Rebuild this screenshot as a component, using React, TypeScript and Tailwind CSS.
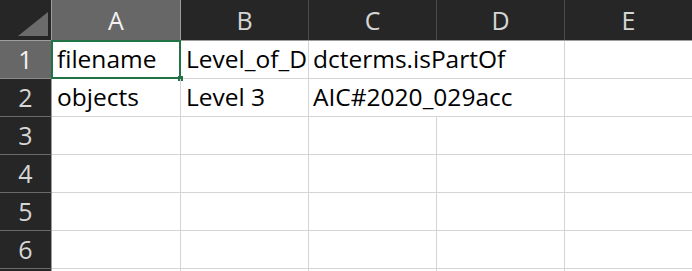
const cols = [
  { key: "A", w: "w-[129px]" },
  { key: "B", w: "w-[128px]" },
  { key: "C", w: "w-[128px]" },
  { key: "D", w: "w-[128px]" },
  { key: "E", w: "w-[128px]" },
];

const rows = [
  { n: 1, a: "filename", b: "Level_of_D", c: "dcterms.isPartOf" },
  { n: 2, a: "objects", b: "Level 3", c: "AIC#2020_029acc" },
  { n: 3 },
  { n: 4 },
  { n: 5 },
  { n: 6 },
  { n: 0 },
];

const font = { fontFamily: '"Open Sans", "Noto Sans", sans-serif' };

export default function App() {
  return (
    <div className="w-[692px] h-[271px] overflow-hidden bg-white" style={font}>
      {/* column headers */}
      <div className="flex h-[41px] bg-[#262626] border-b border-[#9e9e9e]">
        <div className="w-[52px] shrink-0 border-r border-[#9e9e9e] flex items-end justify-end pr-[3px] pb-[4px]">
          <svg width="30" height="24" viewBox="0 0 30 24">
            <polygon points="30,0 30,24 0,24" fill="#6b6b6b" />
          </svg>
        </div>
        {cols.map((c) => (
          <div
            key={c.key}
            className={`${c.w} shrink-0 border-r flex items-center justify-center text-[25px] leading-none pt-[1px] ${
              c.key === "A"
                ? "bg-[#676767] border-[#9e9e9e] text-[#f2f2f2]"
                : "border-[#4a4a4a] text-[#d6d6d6]"
            }`}
          >
            {c.key}
          </div>
        ))}
      </div>

      {rows.map((r, i) => (
        <div key={i} className="flex h-[38px]">
          <div
            className={`w-[52px] shrink-0 border-r border-b border-r-[#9e9e9e] flex items-center justify-center text-[25px] leading-none ${
              r.n === 1
                ? "bg-[#676767] text-[#f2f2f2] border-b-[#8a8a8a]"
                : "bg-[#262626] text-[#d6d6d6] border-b-[#6a6a6a]"
            }`}
          >
            {r.n > 0 ? r.n : ""}
          </div>

          {/* A */}
          <div className="relative w-[129px] shrink-0 border-r border-b border-[#d4d4d4] flex items-end px-[5px] pb-[3px] text-[24.5px] leading-[32px] text-black whitespace-nowrap">
            {r.a}
            {r.n === 1 && (
              <>
                <div className="absolute left-[-1px] top-[-1px] w-[130px] h-[39px] border-2 border-[#217346] pointer-events-none" />
                <div className="absolute right-[-3px] bottom-[-3px] w-[5px] h-[5px] bg-[#217346]" />
              </>
            )}
          </div>

          {/* B */}
          <div className="w-[128px] shrink-0 border-r border-b border-[#d4d4d4] flex items-end px-[5px] pb-[3px] text-[24.5px] leading-[32px] text-black whitespace-nowrap overflow-hidden">
            {r.b}
          </div>

          {/* C + D */}
          {r.c ? (
            <div className="w-[256px] shrink-0 border-r border-b border-[#d4d4d4] flex items-end px-[4px] pb-[3px] text-[24.5px] leading-[32px] text-black whitespace-nowrap">
              {r.c}
            </div>
          ) : (
            <>
              <div className="w-[128px] shrink-0 border-r border-b border-[#d4d4d4]" />
              <div className="w-[128px] shrink-0 border-r border-b border-[#d4d4d4]" />
            </>
          )}

          {/* E */}
          <div className="w-[128px] shrink-0 border-r border-b border-[#d4d4d4]" />
        </div>
      ))}
    </div>
  );
}
